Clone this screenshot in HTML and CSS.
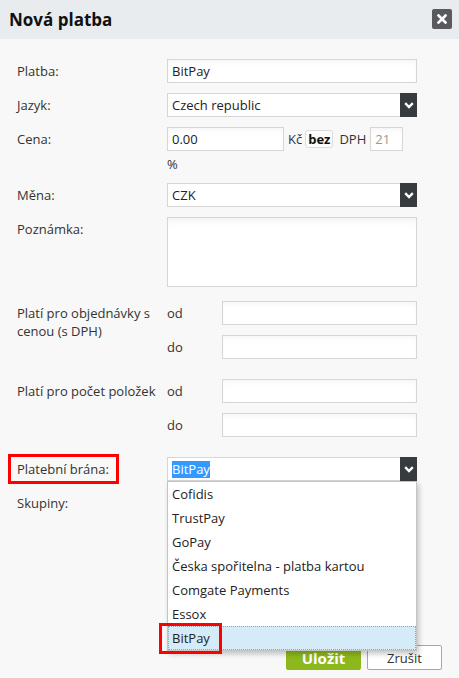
FILE: index.html
```html
<!DOCTYPE html>
<html lang="cs">
<head>
<meta charset="utf-8">
<title>Nová platba</title>
<link rel="stylesheet" href="styles.css">
</head>
<body>
<div class="dialog">
  <header class="dlg-head">
    <h1 class="dlg-title">Nová platba</h1>
    <button class="close" type="button" aria-label="Zavřít">
      <svg width="10" height="10" viewBox="0 0 10 10"><path d="M1.5 1.5 L8.5 8.5 M8.5 1.5 L1.5 8.5" stroke="#fff" stroke-width="2.6" stroke-linecap="square" fill="none"/></svg>
    </button>
  </header>
  <form class="dlg-body">
    <div class="row">
      <label class="lbl">Platba:</label>
      <div class="ctl"><input class="input" type="text" value="BitPay"></div>
    </div>
    <div class="row">
      <label class="lbl">Jazyk:</label>
      <div class="ctl">
        <div class="select"><span class="sel-text">Czech republic</span><span class="arrow"><svg width="10" height="7" viewBox="0 0 10 7"><path d="M1.2 1.2 L5 5 L8.8 1.2" stroke="#fff" stroke-width="2.4" fill="none"/></svg></span></div>
      </div>
    </div>
    <div class="row">
      <label class="lbl">Cena:</label>
      <div class="ctl">
        <div class="price-line">
          <input class="input in-price" type="text" value="0.00">
          <span class="unit u-kc">Kč</span>
          <button class="tax-btn" type="button">bez</button>
          <span class="unit u-dph">DPH</span>
          <input class="input in-vat" type="text" value="21">
        </div>
        <div class="pct">%</div>
      </div>
    </div>
    <div class="row">
      <label class="lbl">Měna:</label>
      <div class="ctl">
        <div class="select"><span class="sel-text">CZK</span><span class="arrow"><svg width="10" height="7" viewBox="0 0 10 7"><path d="M1.2 1.2 L5 5 L8.8 1.2" stroke="#fff" stroke-width="2.4" fill="none"/></svg></span></div>
      </div>
    </div>
    <div class="row">
      <label class="lbl">Poznámka:</label>
      <div class="ctl"><textarea class="input area"></textarea></div>
    </div>
    <div class="row row-range">
      <label class="lbl">Platí pro objednávky s cenou (s DPH)</label>
      <div class="ctl range">
        <span class="rlbl">od</span><input class="input" type="text">
        <span class="rlbl">do</span><input class="input" type="text">
      </div>
    </div>
    <div class="row row-range2">
      <label class="lbl">Platí pro počet položek</label>
      <div class="ctl range">
        <span class="rlbl">od</span><input class="input" type="text">
        <span class="rlbl">do</span><input class="input" type="text">
      </div>
    </div>
    <div class="row row-gate">
      <span class="mark mark-label"></span>
      <label class="lbl">Platební brána:</label>
      <div class="ctl gate">
        <div class="select"><span class="sel-text"><span class="sel-hl">BitPay</span></span><span class="arrow"><svg width="10" height="7" viewBox="0 0 10 7"><path d="M1.2 1.2 L5 5 L8.8 1.2" stroke="#fff" stroke-width="2.4" fill="none"/></svg></span></div>
        <ul class="dropdown">
          <li>Cofidis</li>
          <li>TrustPay</li>
          <li>GoPay</li>
          <li>Česka spořitelna - platba kartou</li>
          <li>Comgate Payments</li>
          <li>Essox</li>
          <li class="active">BitPay<span class="mark mark-item"></span></li>
        </ul>
      </div>
    </div>
    <div class="row row-groups">
      <label class="lbl">Skupiny:</label>
      <div class="ctl groups"></div>
    </div>
    <div class="actions">
      <button class="btn btn-save" type="button">Uložit</button>
      <button class="btn btn-cancel" type="button">Zrušit</button>
    </div>
  </form>
</div>
</body>
</html>
```
FILE: styles.css
```css
* { box-sizing: border-box; }
html, body { margin: 0; padding: 0; }
body {
  font-family: "Open Sans", "Liberation Sans", sans-serif;
  font-size: 13px;
  color: #333;
  background: #f8f8f8;
}
.dialog {
  width: 459px;
  min-height: 678px;
  background: #f8f8f8;
}
.dlg-head {
  height: 39px;
  background: #e9ecef;
  display: flex;
  align-items: center;
  justify-content: space-between;
  padding: 0 7px 0 9px;
}
.dlg-title {
  margin: 0;
  font-size: 17px;
  font-weight: 700;
  color: #111;
  line-height: 22px;
  padding-top: 1px;
}
.close {
  width: 20px;
  height: 20px;
  margin-top: -2px;
  border: 0;
  border-radius: 2px;
  background: #575b60;
  padding: 0;
  display: flex;
  align-items: center;
  justify-content: center;
}
.dlg-body {
  padding: 20px 17px 0 17px;
  margin: 0;
  display: flex;
  flex-direction: column;
}
.row {
  display: grid;
  grid-template-columns: 150px 250px;
  margin-bottom: 10px;
  position: relative;
}
.lbl {
  display: block;
  line-height: 18px;
  padding-top: 3px;
  padding-right: 6px;
}
.ctl { position: relative; }
.input {
  display: block;
  width: 100%;
  height: 24px;
  border: 1px solid #d6d6d6;
  background: #fff;
  box-shadow: inset 0 4px 6px -3px rgba(0,0,0,0.06);
  font: inherit;
  font-size: 13px;
  color: #222;
  padding: 0 4px;
  margin: 0;
  outline: none;
}
.select {
  display: flex;
  height: 24px;
  border: 1px solid #d6d6d6;
  border-right: 0;
  background: #fff;
}
.sel-text {
  flex: 1;
  padding-left: 4px;
  line-height: 22px;
  color: #222;
}
.sel-hl {
  display: inline-block;
  background: #3399ff;
  color: #fff;
  line-height: 17px;
}
.arrow {
  width: 17px;
  margin-top: -1px;
  margin-bottom: -1px;
  background: #373b3f;
  display: flex;
  align-items: center;
  justify-content: center;
}
.price-line {
  display: flex;
  align-items: center;
  height: 24px;
}
.in-price { width: 117px; }
.unit { color: #333; }
.u-kc { margin-left: 4px; }
.tax-btn {
  margin-left: 3px;
  height: 18px;
  padding: 0 2px;
  border: 1px solid #dcdcdc;
  border-radius: 3px;
  background: #fcfcfc;
  font: inherit;
  font-size: 13px;
  font-weight: 700;
  color: #111;
  line-height: 15px;
}
.u-dph { margin-left: 6px; }
.in-vat { width: 33px; margin-left: 4px; color: #999; }
.pct {
  line-height: 22px;
  height: 22px;
  padding-top: 2px;
}
.area {
  height: 70px;
  resize: none;
  box-shadow: inset 0 8px 8px -6px rgba(0,0,0,0.07);
}
.row-range { margin-top: 4px; }
.row-range2, .row-gate { margin-top: 10px; }
.range {
  display: grid;
  grid-template-columns: 55px 195px;
  row-gap: 10px;
}
.rlbl {
  line-height: 18px;
  padding-top: 3px;
}
.mark {
  position: absolute;
  border: 3px solid #ff0000;
  pointer-events: none;
  z-index: 5;
}
.mark-label {
  left: -9px;
  top: -3px;
  width: 111px;
  height: 30px;
}
.dropdown {
  position: absolute;
  top: 24px;
  left: 0;
  width: 250px;
  margin: 0;
  padding: 0;
  list-style: none;
  background: #fff;
  border: 1px solid #c4c4c4;
  box-shadow: 2px 3px 5px rgba(0,0,0,0.22);
  z-index: 4;
}
.dropdown li {
  position: relative;
  height: 24px;
  line-height: 24px;
  padding-left: 4px;
  color: #222;
}
.dropdown li.active {
  background: #d6ebf8;
  outline: 1px dotted #8aa4cf;
  outline-offset: -1px;
}
.mark-item {
  left: -9px;
  top: -3px;
  width: 63px;
  height: 31px;
}
.groups { height: 130px; }
.actions {
  display: flex;
  justify-content: flex-end;
  gap: 6px;
  margin-top: 14px;
}
.btn {
  width: 75px;
  height: 25px;
  border-radius: 2px;
  font: inherit;
  padding: 0;
}
.btn-save {
  background: #8db81b;
  border: 1px solid #8db81b;
  color: #fff;
  font-weight: 700;
  font-size: 15px;
}
.btn-cancel {
  background: #fff;
  border: 1px solid #a3a7ab;
  color: #333;
  font-size: 13px;
}
```
